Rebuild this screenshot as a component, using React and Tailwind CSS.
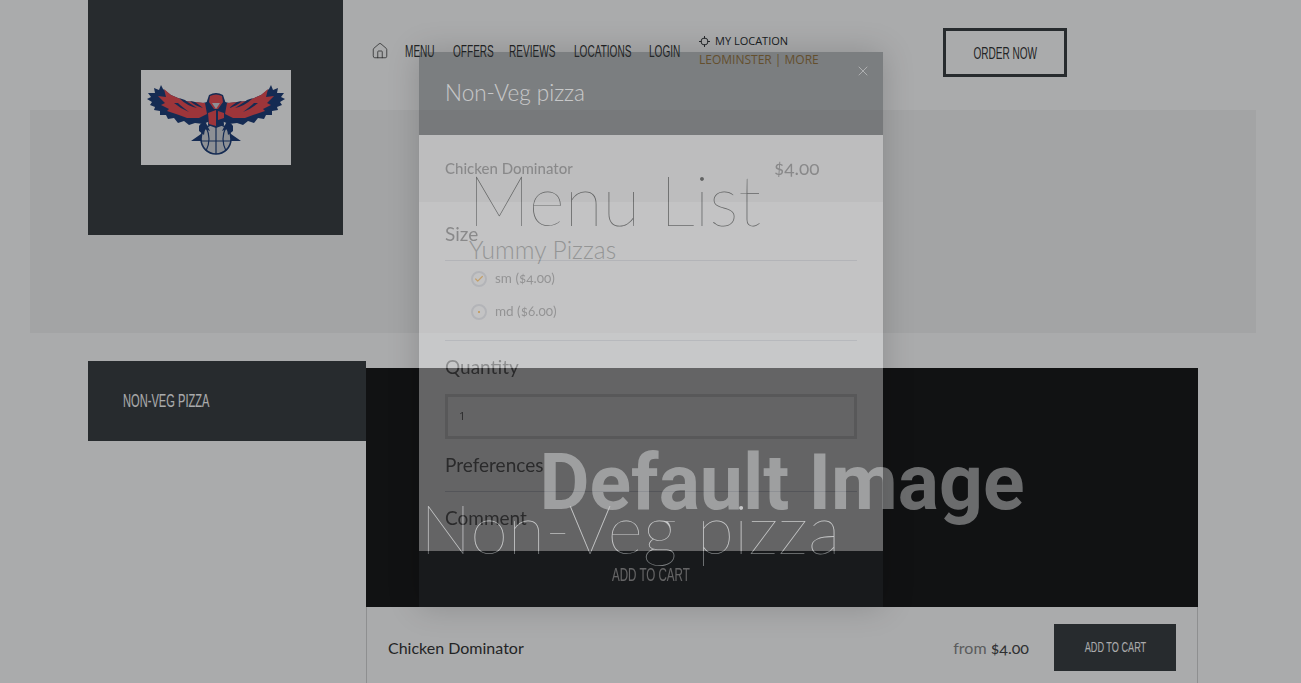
import { House, X, Check } from "lucide-react";

const navItems = [
    { label: "MENU", width: "w-[48px]" },
    { label: "OFFERS", width: "w-[56px]" },
    { label: "REVIEWS", width: "w-[65px]" },
    { label: "LOCATIONS", width: "w-[75px]" },
    { label: "LOGIN", width: "w-[50px]" },
];

const narrow = "font-['Liberation_Sans',sans-serif]";
const raleway = "font-['Lato',sans-serif]";
const montserrat = "font-['Open_Sans',sans-serif]";

// no condensed family is installed, so squeeze the letters
const Squeezed = ({ children, className = "scale-x-[.61]" }) => (
    <span className={`inline-block whitespace-nowrap ${narrow} ${className}`}>{children}</span>
);

// half a hawk, the other half is mirrored
const HawkWing = () => (
    <g>
        <path
            d="M70 31 L62 33 L44 31 L30 25 L22 19 L20 15 L18 20 L13 18 L14 23 L7 23 L10 27 L6 29 L11 32 L9 35 L14 37 L13 40 L19 41 L19 45 L25 45 L27 49 L33 48 L37 53 L43 51 L48 55 L54 53 L62 54 L72 50 Z"
            fill="#1e3e78"
        />
        <path
            d="M64 33 L44 31 L30 25 L23 19 L25 27 L17 26 L24 33 L20 35 L28 39 L26 41 L38 45 L46 48 L58 48 L66 44 Z"
            fill="#eb4c53"
        />
        <path d="M38 28 Q46 36 56 38 Q48 33 44 30 Z M49 31 Q54 36 62 38 Q57 34 54 32 Z M33 33 Q40 39 48 42 Q40 36 37 33 Z" fill="#1e3e78" />
    </g>
);

const HawkLogo = () => (
    <svg viewBox="0 0 150 95" className="w-[150px] h-[95px] bg-white">
        <HawkWing />
        <g transform="matrix(-1 0 0 1 150 0)">
            <HawkWing />
        </g>
        <path d="M50 71 L60 64 L62 71 Z M100 71 L90 64 L88 71 Z" fill="#1e3e78" />
        <circle cx="75" cy="69" r="15" fill="#d4d7dc" stroke="#1e3e78" strokeWidth="1.6" />
        <path d="M75 54 V84 M60 71 H90 M65 57 Q71 69 65 81 M85 57 Q79 69 85 81" fill="none" stroke="#1e3e78" strokeWidth="1.2" />
        <path d="M68 25 Q75 21 82 25 L85 34 L82 41 L83 55 L75 58 L67 55 L68 41 L65 34 Z" fill="#1e3e78" />
        <path d="M69 26 Q75 23 81 26 L82 32 L77 39 L73 39 L68 32 Z" fill="#eb4c53" />
        <path d="M67 43 L75 40 L75 56 L68 54 Z M83 43 L77 41 L77 50 L83 48 Z" fill="#eb4c53" />
        <path d="M71 33 L79 33 L75 39 Z" fill="#d4d7dc" />
        <path d="M58 56 Q61 51 65 53 L69 61 L64 59 L63 65 L58 61 Z M92 56 Q89 51 85 53 L81 61 L86 59 L87 65 L92 61 Z" fill="#1e3e78" />
    </svg>
);

const Radio = ({ label, checked }) => (
    <div className={`flex items-center gap-2 h-[33px] pl-[26px] text-[13.5px] text-[#777] oldstyle-nums ${raleway}`}>
        <span className="w-4 h-4 rounded-full border-2 border-gray-300 flex items-center justify-center">
            {checked ? <Check size={10} strokeWidth={3} className="text-amber-500" /> : <span className="w-[2px] h-[2px] bg-amber-500" />}
        </span>
        <span>{label}</span>
    </div>
);

const ItemModal = () => (
    <div className="fixed left-[419px] top-[52px] z-50 w-[464px] h-[555px] flex flex-col bg-white opacity-[.35] shadow-[0_0_30px_rgba(0,0,0,.5)]">
        <div className="h-[83px] shrink-0 bg-[#272b2e] flex items-center pl-[26px] pb-[2px] relative">
            <h3 className={`text-[22.5px] font-light text-white ${raleway}`}>Non-Veg pizza</h3>
            <X size={16} strokeWidth={1} className="absolute right-[12px] top-[11px] text-white" />
        </div>
        <div className={`h-[67px] shrink-0 bg-[#eeeeee] flex items-center px-[26px] text-[#5a5a5a] ${raleway}`}>
            <span className="w-[329px] text-[15px] font-medium">Chicken Dominator</span>
            <span className="text-[19px] oldstyle-nums">$4.00</span>
        </div>
        <div className={`flex-1 px-[26px] text-[#5a5a5a] ${raleway}`}>
            <div className="h-[59px] border-b border-gray-300 flex items-end pb-[12px] text-[19px]">Size</div>
            <div className="pt-[1px] h-[80px] border-b border-gray-300">
                <Radio label="sm ($4.00)" checked />
                <Radio label="md ($6.00)" />
            </div>
            <div className="h-[53px] flex items-end pb-[13px] text-[19px]">Quantity</div>
            <div className={`h-[45px] border-[3px] border-[#dddddd] flex items-center pl-[11px] text-[11px] text-[#555] ${montserrat}`}>1</div>
            <div className="h-[53px] border-b border-gray-300 flex items-end pb-[12px] text-[19px]">Preferences</div>
            <div className="pt-[12px] text-[19px]">Comment</div>
        </div>
        <div className="h-[56px] shrink-0 bg-[#272b2e] flex items-center justify-center pb-[7px] text-white">
            <Squeezed className="text-[19px] scale-x-[.61]">ADD TO CART</Squeezed>
        </div>
    </div>
);

const App = () => {
    return (
        <div className="relative h-screen overflow-hidden bg-white">
            {/* header, the logo square hangs down over the hero band */}
            <div className="h-[110px] pl-[88px] flex items-start relative z-10">
                <div className="w-[255px] h-[235px] shrink-0 bg-[#393d40] flex items-center justify-center">
                    <HawkLogo />
                </div>
                <div className="ml-[28px] mt-[42px] h-[18px] flex items-center text-[16.5px] text-[#333]">
                    <House size={18} strokeWidth={1} className="mr-[16px] shrink-0" />
                    {navItems.map((item) => (
                        <span key={item.label} className={`${item.width} shrink-0`}>
                            <Squeezed className="origin-left scale-x-[.61]">{item.label}</Squeezed>
                        </span>
                    ))}
                </div>
                <div className={`w-[119px] shrink-0 mt-[32px] text-[11px] ${montserrat}`}>
                    <div className="flex items-center gap-[5px] h-[18px] text-[#272b2e]">
                        <svg viewBox="0 0 12 12" className="w-[11px] h-[11px]" fill="none" stroke="currentColor">
                            <circle cx="6" cy="6" r="3.8" />
                            <path d="M6 0V3M6 9V12M0 6H3M9 6H12" />
                        </svg>
                        MY LOCATION
                    </div>
                    <div className="mt-[1px] text-[#c8923f] text-[12px] whitespace-nowrap">LEOMINSTER | MORE</div>
                </div>
                <button className="ml-[125px] mt-[28px] w-[124px] h-[49px] shrink-0 border-[3px] border-[#393d40] text-[16.5px] text-[#333] pt-[2px]">
                    <Squeezed>ORDER NOW</Squeezed>
                </button>
            </div>

            {/* hero band */}
            <div className={`ml-[30px] mr-[45px] h-[223px] bg-[#f4f4f4] pl-[438px] pt-[47px] ${raleway}`}>
                <h1 className="text-[69.5px] leading-[84px] font-thin text-[#222]">Menu List</h1>
                <p className="text-[24.5px] leading-[30px] ml-[1px] mt-[-6px] font-light text-[#888]">Yummy Pizzas</p>
            </div>

            {/* menu */}
            <div className="flex pl-[88px] pt-[28px]">
                <div className="w-[278px] h-[80px] shrink-0 bg-[#393d40] flex items-center pl-[35px] text-white">
                    <Squeezed className="origin-left text-[19px] scale-x-[.585]">NON-VEG PIZZA</Squeezed>
                </div>
                <div className="w-[832px] mt-[7px]">
                    <div className="relative h-[239px] bg-[#171718] overflow-hidden">
                        <div className="absolute left-0 right-0 top-[69px] text-center font-['Roboto',sans-serif] text-[77px] leading-[92px] font-bold text-[#a0a0a0]">
                            Default Image
                        </div>
                        <div className={`absolute left-[54px] top-[117px] text-[68.5px] leading-[86px] font-thin text-white ${raleway}`}>
                            Non-Veg pizza
                        </div>
                    </div>
                    <div className={`h-[80px] border-x border-[#d5d5d5] flex items-center pl-[21px] pr-[21px] ${raleway}`}>
                        <span className="flex-1 pt-[2px] text-[16px] text-[#333]">Chicken Dominator</span>
                        <span className="pt-[2px] text-[16px] text-[#888] oldstyle-nums">from <span className="text-[#444]">$4.00</span></span>
                        <button className="ml-[25px] w-[122px] h-[47px] bg-[#393d40] text-[15px] text-white">
                            <Squeezed>ADD TO CART</Squeezed>
                        </button>
                    </div>
                </div>
            </div>

            <div className="fixed inset-0 z-40 bg-[#05080c]/[.34]" />
            <ItemModal />
        </div>
    );
};

export default App;
